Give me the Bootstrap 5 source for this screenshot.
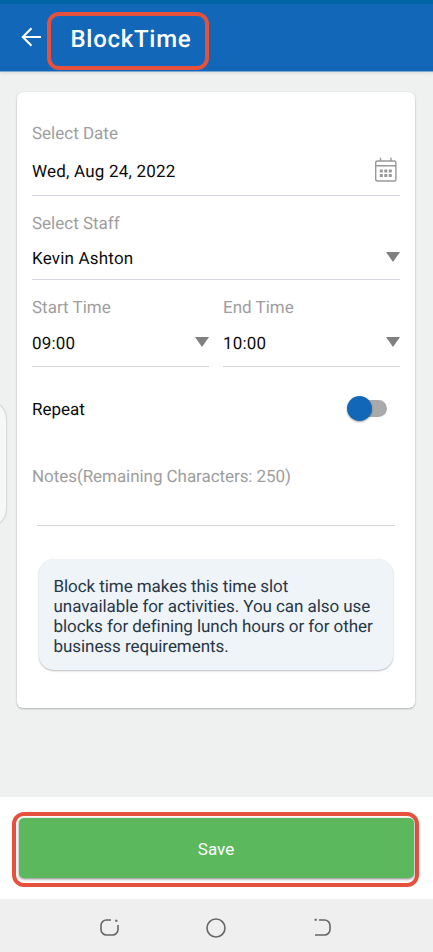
<!DOCTYPE html>
<html lang="en">
<head>
<meta charset="utf-8">
<meta name="viewport" content="width=device-width, initial-scale=1">
<title>BlockTime</title>
<link href="https://cdn.jsdelivr.net/npm/bootstrap@5.3.0/dist/css/bootstrap.min.css" rel="stylesheet">
<style>
body{font-family:Roboto,"Liberation Sans",sans-serif;font-size:17px;line-height:20px;color:#0c0c0c;background:#eff1f1;height:952px;overflow:hidden;text-rendering:geometricPrecision}
.status-strip{height:4px;background:#0067a6}
.app-bar{height:68px;background:#1267b8;border-bottom:1px solid #7ea6d2;box-shadow:0 1px 3px rgba(0,0,0,.1);padding:8px 0 1px 21px}
.title-frame{width:162px;height:58px;border:4px solid #e6513d;border-radius:12px;margin-left:5px;padding:0 0 4px 19.5px;color:#fff;font-size:24px;font-weight:500;letter-spacing:.72px}
.back{margin-top:-8px}
.form-card{width:398px;height:616px;margin:20px 0 0 17px;padding:32px 15px 0 15px;border-radius:6px;box-shadow:0 1px 2px rgba(0,0,0,.25),0 0 1px rgba(0,0,0,.16)}
.field-label{color:#9e9e9e}
.field-value{border-bottom:1px solid #d4d5de}
.field-value span{letter-spacing:.2px}
.v-date{margin-top:18px;padding-bottom:13px}
.v-staff{margin-top:15px;padding-bottom:10px}
.v-time{margin-top:16px;padding-bottom:12px}
.after-field{margin-top:18px}
.time-pair{gap:14px}
.caret{width:14px;height:10px;background:#808080;clip-path:polygon(0 0,100% 0,50% 100%);margin-top:-4px}
.cal{margin:-5px 2px 0 0}
.repeat-row{margin-top:33px;padding-right:13px}
.switch-track{width:34px;height:17px;border-radius:9px;background:#aaa;margin-top:-4px}
.switch-knob{width:25px;height:25px;background:#1267b8;box-shadow:0 1px 2px rgba(0,0,0,.35);margin-left:-6px}
.notes{margin-top:47px;letter-spacing:-.055px}
.notes-line{height:39px;margin:0 5px;border-bottom:1px solid #d4d5de}
.info-box{height:111px;margin:33px 7px 0 7px;padding:18px 0 0 14.5px;border-radius:15px;background:#eff4f9;color:#283746;box-shadow:0 1px 2px rgba(0,0,0,.28);white-space:nowrap;letter-spacing:-.065px}
.action-bar{height:102px;margin-top:89px;padding:15px 14px 0 12px}
.save-frame{height:75px;border:4px solid #e6513d;border-radius:12px;padding:2px 1.5px 5px 2.5px}
.save-btn{background:#5cb85c;color:#fff;border:0;border-radius:5px;font-size:17px;box-shadow:0 1px 3px rgba(0,0,0,.5);padding:3px 0 0 0}
.save-btn:hover{background:#5cb85c;color:#fff}
.sys-nav{height:53px;background:#efefef}
.edge-handle{left:-30px;top:401px;width:36px;height:126px;border-radius:18px;background:#f6f8f8;box-shadow:0 0 2px rgba(0,0,0,.35)}
</style>
</head>
<body class="position-relative d-flex flex-column">
<div class="status-strip flex-shrink-0"></div>
<header class="app-bar d-flex align-items-center flex-shrink-0">
  <svg class="back" width="21" height="20" viewBox="0 0 21 20" fill="none" stroke="#fff" stroke-width="2.1"><path d="M20 10H2M10.5 1.2L1.8 10l8.7 8.8"/></svg>
  <div class="title-frame d-flex align-items-center">BlockTime</div>
</header>
<main class="form-card card border-0 d-block flex-shrink-0">
  <div class="field-label">Select Date</div>
  <div class="field-value v-date d-flex justify-content-between align-items-center">
    <span>Wed, Aug 24, 2022</span>
    <svg class="cal" width="24" height="25" viewBox="0 0 24 25" fill="none" stroke="#999" stroke-width="1.4"><rect x="1.7" y="4" width="20.2" height="20" rx="1.8"/><path d="M2 8.7h20M6.5 .8v3.2M17 .8v3.2"/><path stroke="none" fill="#999" d="M5.8 12.4h3v3h-3zm4.5 0h3v3h-3zm4.5 0h3v3h-3zM5.8 17h3v3h-3zm4.5 0h3v3h-3zm4.5 0h3v3h-3z"/></svg>
  </div>
  <div class="field-label after-field">Select Staff</div>
  <div class="field-value v-staff d-flex justify-content-between align-items-center"><span>Kevin Ashton</span><i class="caret"></i></div>
  <div class="time-pair d-flex after-field">
    <div class="flex-fill w-50">
      <div class="field-label">Start Time</div>
      <div class="field-value v-time d-flex justify-content-between align-items-center"><span>09:00</span><i class="caret"></i></div>
    </div>
    <div class="flex-fill w-50">
      <div class="field-label">End Time</div>
      <div class="field-value v-time d-flex justify-content-between align-items-center"><span>10:00</span><i class="caret"></i></div>
    </div>
  </div>
  <div class="repeat-row d-flex justify-content-between align-items-center">
    <span>Repeat</span>
    <div class="switch-track d-flex align-items-center"><div class="switch-knob rounded-circle flex-shrink-0"></div></div>
  </div>
  <div class="field-label notes">Notes(Remaining Characters: 250)</div>
  <div class="notes-line"></div>
  <div class="info-box">Block time makes this time slot<br>unavailable for activities. You can also use<br>blocks for defining lunch hours or for other<br>business requirements.</div>
</main>
<div class="action-bar bg-white flex-shrink-0">
  <div class="save-frame"><button class="save-btn btn w-100 h-100">Save</button></div>
</div>
<nav class="sys-nav flex-shrink-0">
  <svg class="d-block" width="433" height="53" viewBox="0 0 433 53" fill="none" stroke="#666" stroke-width="1.6">
    <path d="M111 21h-4.5a5.5 5.5 0 0 0-5.5 5.5v4a5.5 5.5 0 0 0 5.5 5.5h6a5.5 5.5 0 0 0 5.5-5.5V26"/>
    <circle cx="216" cy="29" r="9"/>
    <path d="M319 21h5.5a5.5 5.5 0 0 1 5.5 5.5v4a5.5 5.5 0 0 1-5.500 5.500h-9.500"/>
    <path stroke="none" fill="#666" d="M115.200 20.800h2.200v2h-2.200zM314.600 19.800h2.200v2h-2.200z"/>
  </svg>
</nav>
<div class="edge-handle position-absolute"></div>
<script src="https://cdn.jsdelivr.net/npm/bootstrap@5.3.0/dist/js/bootstrap.bundle.min.js"></script>
</body>
</html>
